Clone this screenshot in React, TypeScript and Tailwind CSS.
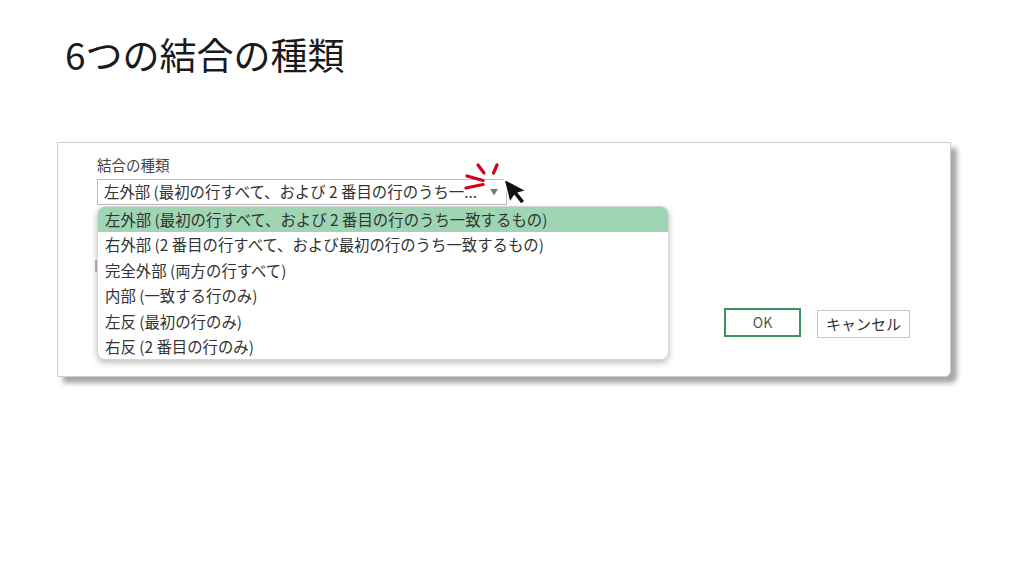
import React from "react"

const font = { fontFamily: '"Noto Sans CJK JP", "Noto Sans", sans-serif' }

const options = [
  "左外部 (最初の行すべて、および 2 番目の行のうち一致するもの)",
  "右外部 (2 番目の行すべて、および最初の行のうち一致するもの)",
  "完全外部 (両方の行すべて)",
  "内部 (一致する行のみ)",
  "左反 (最初の行のみ)",
  "右反 (2 番目の行のみ)",
]

const Sparkle = () => (
  <svg className="absolute left-[405px] top-[18px]" width="40" height="34" viewBox="0 0 40 34">
    <g stroke="#d0021b" strokeWidth="3.2" strokeLinecap="round" fill="none">
      <line x1="3" y1="27" x2="20" y2="23.5" />
      <line x1="4" y1="15" x2="20" y2="19.5" />
      <line x1="15" y1="4" x2="21" y2="12" />
      <line x1="34" y1="4" x2="30.5" y2="12" />
    </g>
  </svg>
)

const Cursor = () => (
  <svg className="absolute left-[444px] top-[34px]" width="30" height="34" viewBox="0 0 30 34">
    <path
      d="M2 2 L2 26 L8 20.5 L12.5 30.5 L17 28.5 L12.5 18.8 L20.5 18.8 Z"
      fill="#111"
      stroke="#fff"
      strokeWidth="1.2"
      strokeLinejoin="round"
      transform="rotate(-14 2 2)"
    />
  </svg>
)

export default function App() {
  return (
    <div className="w-[1024px] h-[576px] bg-white overflow-hidden" style={font}>
      <div className="pt-[29px] pl-[65px]">
        <h1 className="text-[37px] leading-[50px] text-[#1a1a1a] font-normal">6つの結合の種類</h1>
      </div>
      <div className="mt-[63px] ml-[57px] w-[894px] h-[235px] relative bg-white border border-[#cfcfcf] rounded-br-[6px] shadow-[6px_6px_5px_rgba(0,0,0,0.35)] flex flex-col pl-[39px] pr-[40px] pt-[12px]">
        <div className="text-[14.5px] leading-[20px] text-[#444]">結合の種類</div>
        <div className="mt-[4px] w-[410px] h-[26px] border border-[#bdbdbd] flex items-center pl-[6px] pr-[8px] text-[15.4px] text-[#333]">
          <span className="flex-1 whitespace-nowrap overflow-hidden">左外部 (最初の行すべて、および 2 番目の行のうち一...</span>
          <span className="text-[8px] text-[#777] ml-[6px]">▼</span>
        </div>
        <div className="mt-[55px] w-[2px] h-[12px] ml-[-2px] bg-[#bbb]" />
        <div className="mt-[36px] flex justify-end items-start gap-[16px]">
          <button className="w-[77px] h-[29px] border-2 border-[#3f8f5f] text-[14px] text-[#555] bg-white">OK</button>
          <button className="w-[93px] h-[28px] mt-[2px] border border-[#c8c8c8] text-[15px] text-[#333] bg-white">キャンセル</button>
        </div>
        <div className="absolute left-[39px] top-[63px] w-[572px] h-[154px] bg-white border border-[#d6d6d6] rounded-[8px] overflow-hidden shadow-[0_3px_6px_rgba(0,0,0,0.25)]">
          {options.map((o, i) => (
            <div
              key={i}
              className={`h-[25.4px] leading-[25.4px] pl-[7px] text-[15.4px] text-[#333] whitespace-nowrap ${i === 0 ? "bg-[#9fd5b3]" : ""}`}
            >
              {o}
            </div>
          ))}
        </div>
        <Sparkle />
        <Cursor />
      </div>
    </div>
  )
}
